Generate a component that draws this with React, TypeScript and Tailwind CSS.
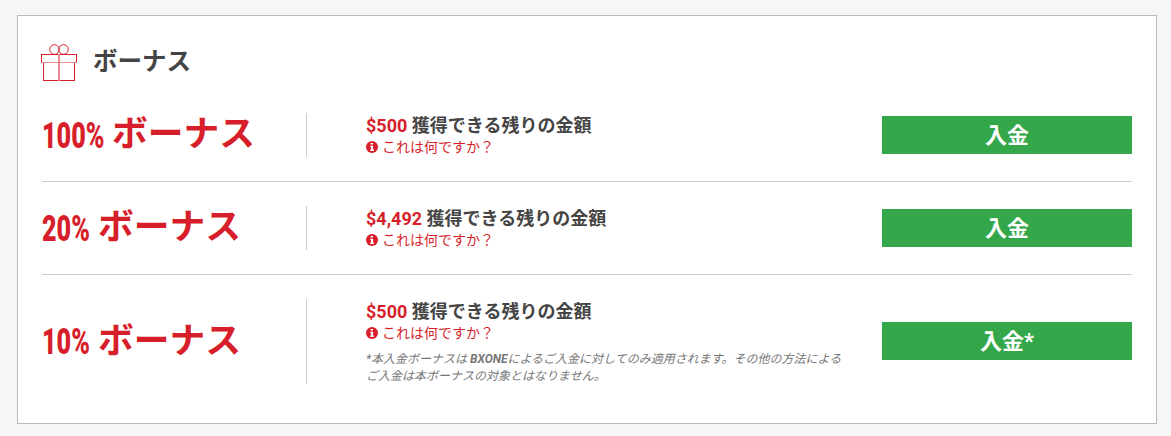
const bonuses = [
  { pct: '100%', pctWidth: 'w-[70px]', amount: '$500', button: '入金', note: false },
  { pct: '20%', pctWidth: 'w-[56px]', amount: '$4,492', button: '入金', note: false },
  { pct: '10%', pctWidth: 'w-[56px]', amount: '$500', button: '入金*', note: true },
];

function GiftIcon() {
  return (
    <svg width="36" height="37" viewBox="0 0 36 37" fill="none" stroke="#d71f2b" strokeWidth="1">
      <rect x="0.5" y="10.5" width="35" height="8" />
      <rect x="2.5" y="18.5" width="31" height="18" />
      <path d="M18 10v27" stroke="#e88b92" strokeWidth="2" />
      <path d="M0 18.5h36" stroke="#e88b92" />
      <circle cx="13.5" cy="5.5" r="4.8" />
      <circle cx="22.5" cy="5.5" r="4.8" />
    </svg>
  );
}

function InfoIcon() {
  return (
    <svg width="12" height="12" viewBox="0 0 12 12">
      <circle cx="6" cy="6" r="6" fill="#d71f2b" />
      <path d="M4.6 1.9h2.4v1.7H4.6zM4.3 4.7h2.8v3.7h.8v1.5H4.3V8.4h.8V6.2h-.8z" fill="#fff" />
    </svg>
  );
}

export default function App() {
  return (
    <div className="min-h-[436px] bg-[#f6f6f6] pt-[15px] pl-[17px] font-['Roboto','Noto_Sans_CJK_JP',sans-serif]">
      <div className="h-[409px] w-[1140px] border border-[#bbbbbb] bg-white pl-[23px] pr-6 pt-7">
        {/* Header */}
        <div className="flex items-center gap-4 h-[37px]">
          <GiftIcon />
          <h1 className="text-[24.5px] font-bold text-[#444444]">ボーナス</h1>
        </div>
        {/* Rows */}
        <div className="mt-[32px] ml-px">
          {bonuses.map((b, i) => (
            <div
              key={i}
              className={`flex items-center ${i < 2 ? 'border-b border-[#cccccc] pb-6 mb-6' : ''}`}
            >
              <div className="flex w-[265px] shrink-0 items-center self-stretch border-r border-[#cccccc] font-bold text-[#d71f2b]">
                <span className={`inline-block ${b.pctWidth} origin-left scale-x-[0.68] text-[37px] leading-none font-black whitespace-nowrap`}>
                  {b.pct}
                </span>
                <span className="text-[35.75px] leading-none whitespace-nowrap">ボーナス</span>
              </div>
              <div className="ml-[59px] w-[480px] shrink-0">
                <p className="text-lg leading-[26px] font-bold text-[#444444]">
                  <span className="text-[#d71f2b]">{b.amount}</span> 獲得できる残りの金額
                </p>
                <p className="flex h-[18px] items-center gap-1 pb-0.5 text-sm text-[#d71f2b]">
                  <InfoIcon />
                  これは何ですか？
                </p>
                {b.note && (
                  <p className="mt-2 -mb-px text-xs leading-[17px] whitespace-nowrap text-[#777777] italic">
                    *本入金ボーナスは <b>BXONE</b>によるご入金に対してのみ適用されます。その他の方法による
                    <br />
                    ご入金は本ボーナスの対象とはなりません。
                  </p>
                )}
              </div>
              <button className={`ml-[36px] h-[38px] w-[250px] bg-[#34a74b] text-[22px] font-bold text-white ${b.note ? 'mb-px' : ''}`}>
                {b.button}
              </button>
            </div>
          ))}
        </div>
      </div>
    </div>
  );
}
